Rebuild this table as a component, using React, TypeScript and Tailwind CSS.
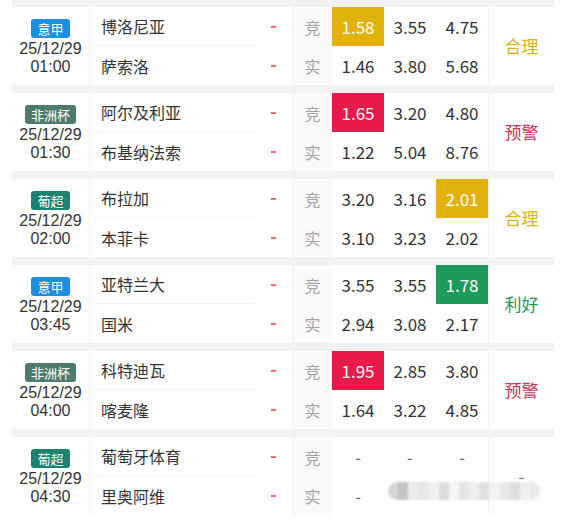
import React from "react";

type Hi = { idx: number; color: string } | null;

type Match = {
  league: string;
  badge: string;
  date: string;
  time: string;
  home: string;
  away: string;
  jing: string[];
  shi: string[];
  hi: Hi;
  result: string;
  resultColor: string;
  blurred?: boolean;
};

const matches: Match[] = [
  {
    league: "意甲",
    badge: "bg-[#1b8fe2]",
    date: "25/12/29",
    time: "01:00",
    home: "博洛尼亚",
    away: "萨索洛",
    jing: ["1.58", "3.55", "4.75"],
    shi: ["1.46", "3.80", "5.68"],
    hi: { idx: 0, color: "bg-[#e3b20a]" },
    result: "合理",
    resultColor: "text-[#d8b21c]",
  },
  {
    league: "非洲杯",
    badge: "bg-[#4e7b6d]",
    date: "25/12/29",
    time: "01:30",
    home: "阿尔及利亚",
    away: "布基纳法索",
    jing: ["1.65", "3.20", "4.80"],
    shi: ["1.22", "5.04", "8.76"],
    hi: { idx: 0, color: "bg-[#e8194b]" },
    result: "预警",
    resultColor: "text-[#c2335e]",
  },
  {
    league: "葡超",
    badge: "bg-[#198270]",
    date: "25/12/29",
    time: "02:00",
    home: "布拉加",
    away: "本菲卡",
    jing: ["3.20", "3.16", "2.01"],
    shi: ["3.10", "3.23", "2.02"],
    hi: { idx: 2, color: "bg-[#e3b20a]" },
    result: "合理",
    resultColor: "text-[#d8b21c]",
  },
  {
    league: "意甲",
    badge: "bg-[#1b8fe2]",
    date: "25/12/29",
    time: "03:45",
    home: "亚特兰大",
    away: "国米",
    jing: ["3.55", "3.55", "1.78"],
    shi: ["2.94", "3.08", "2.17"],
    hi: { idx: 2, color: "bg-[#1d9a5c]" },
    result: "利好",
    resultColor: "text-[#25975e]",
  },
  {
    league: "非洲杯",
    badge: "bg-[#4e7b6d]",
    date: "25/12/29",
    time: "04:00",
    home: "科特迪瓦",
    away: "喀麦隆",
    jing: ["1.95", "2.85", "3.80"],
    shi: ["1.64", "3.22", "4.85"],
    hi: { idx: 0, color: "bg-[#e8194b]" },
    result: "预警",
    resultColor: "text-[#c2335e]",
  },
  {
    league: "葡超",
    badge: "bg-[#198270]",
    date: "25/12/29",
    time: "04:30",
    home: "葡萄牙体育",
    away: "里奥阿维",
    jing: ["-", "-", "-"],
    shi: ["-", "", ""],
    hi: null,
    result: "-",
    resultColor: "text-[#777]",
    blurred: true,
  },
];

// pixelated watermark strip in the last row
const mosaic = [
  "#d6d6d6", "#c4c4c4", "#ececec", "#e6e6e6", "#f0f0f0", "#dcdcdc", "#f4f4f4", "#e4e4e4",
  "#eeeeee", "#e0e0e0", "#f2f2f2", "#e8e8e8", "#dedede", "#efefef", "#e9e9e9",
];

function OddsCell({ v, hi, dash }: { v: string; hi?: string; dash?: boolean }) {
  return (
    <div
      className={`flex items-center justify-center text-[17px] ${
        hi ? `${hi} text-white` : dash ? "text-[#666]" : "text-[#333]"
      }`}
    >
      {v}
    </div>
  );
}

function Dash() {
  return (
    <div className="flex items-center justify-center border-r border-[#f1f1f1]">
      <span className="h-[2px] w-[5px] bg-[#ea7070]" />
    </div>
  );
}

function Group({ m }: { m: Match }) {
  return (
    <div className="relative grid grid-cols-[78px_165px_38px_39px_52px_52px_52px_66px] grid-rows-[39px_39px] bg-white">
      <div className="row-span-2 flex flex-col items-center justify-center gap-[2px] border-r border-[#f3f3f3] pt-[2px]">
        <span className={`${m.badge} rounded-[3px] px-[6px] text-[13px] leading-[19px] text-white`}>
          {m.league}
        </span>
        <span className="text-center font-['Liberation_Sans',sans-serif] text-[16px] leading-[18px] text-[#333]">
          {m.date}
          <br />
          {m.time}
        </span>
      </div>

      <div className="flex items-center border-b border-[#f7f7f7] pl-[11px] text-[16px] text-[#333]">{m.home}</div>
      <Dash />
      <div className="flex items-center justify-center bg-[#fafafa] text-[16px] text-[#a3a3a3]">竞</div>
      {m.jing.map((v, i) => (
        <OddsCell key={i} v={v} hi={m.hi && m.hi.idx === i ? m.hi.color : undefined} dash={v === "-"} />
      ))}
      <div className={`row-span-2 col-start-8 row-start-1 flex items-center justify-center border-l border-[#f3f3f3] text-[17px] ${m.resultColor}`}>
        {m.result}
      </div>

      <div className="flex items-center pl-[11px] text-[16px] text-[#333]">{m.away}</div>
      <Dash />
      <div className="flex items-center justify-center bg-[#fafafa] text-[16px] text-[#a3a3a3]">实</div>
      {m.shi.map((v, i) => (
        <OddsCell key={i} v={v} dash={v === "-"} />
      ))}

      {m.blurred && (
        <div className="absolute left-[376px] top-[45px] flex h-[18px] w-[152px] overflow-hidden rounded-full bg-[#f3f3f3] blur-[1px]">
          {mosaic.map((c, i) => (
            <div key={i} className="h-full flex-1" style={{ backgroundColor: c }} />
          ))}
        </div>
      )}
    </div>
  );
}

export default function App() {
  return (
    <div
      className="h-[521px] w-[574px] overflow-hidden bg-white"
      style={{ fontFamily: '"Noto Sans CJK SC", "Noto Sans", sans-serif' }}
    >
      <div className="ml-[12px] flex w-[542px] flex-col gap-[8px] bg-[#f2f2f2] pt-[7px]">
        {matches.map((m, i) => (
          <Group key={i} m={m} />
        ))}
      </div>
    </div>
  );
}
